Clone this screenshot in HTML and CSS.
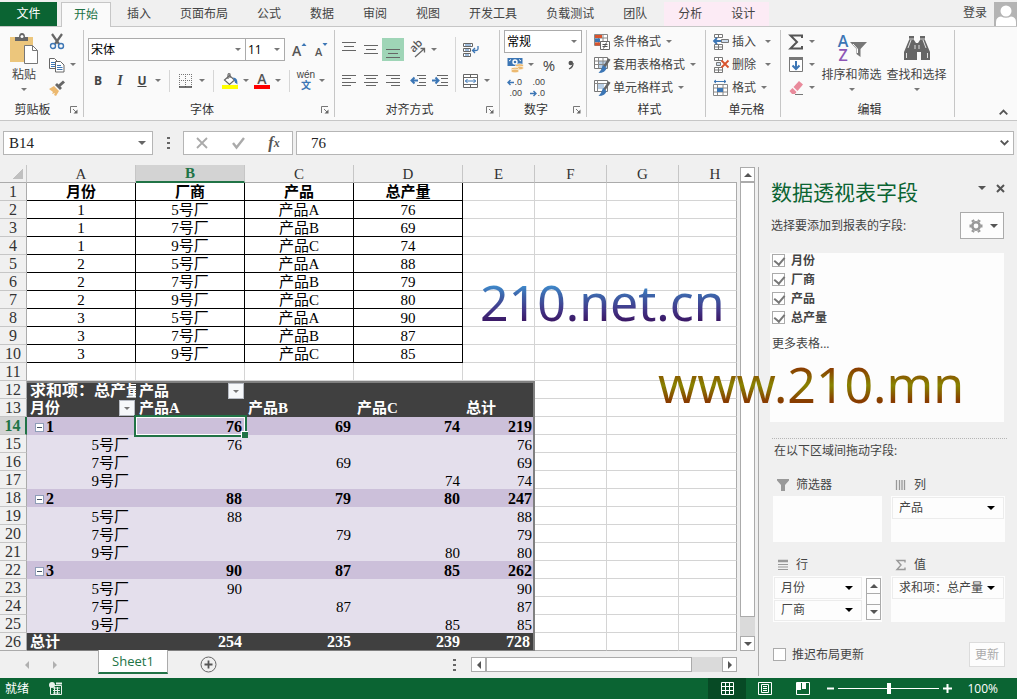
FILE: index.html
```html
<!DOCTYPE html>
<html lang="zh-CN">
<head>
<meta charset="utf-8">
<title>Sheet1</title>
<link rel="stylesheet" href="styles.css">
</head>
<body>
<nav class="tabs">
  <button class="tab file">文件</button>
  <button class="tab active">开始</button>
  <button class="tab">插入</button>
  <button class="tab">页面布局</button>
  <button class="tab">公式</button>
  <button class="tab">数据</button>
  <button class="tab">审阅</button>
  <button class="tab">视图</button>
  <button class="tab">开发工具</button>
  <button class="tab">负载测试</button>
  <button class="tab">团队</button>
  <div class="context"><button class="tab">分析</button><button class="tab">设计</button></div>
  <a class="login" href="#">登录</a>
  <svg class="avatar" width="23" height="24" viewBox="0 0 23 24"><rect width="23" height="24" fill="#b4b4b4"/><circle cx="12" cy="9" r="5.500" fill="#fff"/><path d="M2 24v-4q0-5 5-5.500q5 2.500 10 0q5 .5 5 5.500v4z" fill="#fff"/></svg>
</nav>

<header class="ribbon">
  <section class="group clip">
    <div class="body">
      <button class="big paste">
        <svg width="30" height="32" viewBox="0 0 30 32"><path d="M1 4h23v25H1z" fill="#ecc67c"/><path d="M6 8V4h4q0-4 3-4t3 4h3v4z" fill="#666"/><circle cx="13" cy="3.500" r="1.500" fill="#fff"/><path d="M15.500 12.500h8l5 5v13h-13z" fill="#fff" stroke="#777"/><path d="M23.500 12.500v5h5" fill="none" stroke="#777"/></svg>
        <span>粘贴</span><i class="dn"></i>
      </button>
      <div class="rows">
        <div class="row"><button class="ib" aria-label="剪切"><svg width="16" height="16" viewBox="0 0 16 16"><path d="M3 0l7 10M13 0L6 10" stroke="#666" stroke-width="2.200"/><circle cx="4" cy="12" r="2.500" fill="none" stroke="#3c76b5" stroke-width="1.400"/><circle cx="12" cy="12" r="2.500" fill="none" stroke="#3c76b5" stroke-width="1.400"/></svg></button></div>
        <div class="row"><button class="ib" aria-label="复制"><svg width="16" height="16" viewBox="0 0 16 16"><path d="M.5 1.500h5l3 3v7h-8z" fill="#fff" stroke="#666"/><path d="M2 5.500h4M2 7.500h4M2 9.500h4" stroke="#3c76b5"/><path d="M6.500 4.500h5l3.500 3.500v7H6.500z" fill="#fff" stroke="#666"/><path d="M8 8.500h4M8 10.500h5.500M8 12.500h5.500" stroke="#3c76b5"/></svg></button><i class="dd"></i></div>
        <div class="row"><button class="ib" aria-label="格式刷"><svg width="16" height="16" viewBox="0 0 16 16"><path d="M0 9l5-3 5 5-3 5-2-1 1-2-3 1 1-2z" fill="#ecb970"/><path d="M6 5l5 5 2-2-1.500-1.500L16 2.500 14 .5 9.500 4.500 8 3z" fill="#666"/></svg></button></div>
      </div>
    </div>
    <footer><span>剪贴板</span><button class="launch" aria-label="剪贴板设置"><svg width="8" height="8" viewBox="0 0 8 8"><path d="M.5 7V.5H7M3 3l3 3" fill="none" stroke="#777"/><path d="M7.500 3.500v4h-4z" fill="#666"/></svg></button></footer>
  </section>

  <section class="group font">
    <div class="body two">
      <div class="line">
        <label class="combo name"><select aria-label="字体"><option>宋体</option></select><i class="dn"></i></label>
        <label class="combo size"><select aria-label="字号"><option>11</option></select><i class="dn"></i></label>
        <button class="ib grow" aria-label="增大字号"><svg width="16" height="16" viewBox="0 0 16 16"><text class="glyph" x="1" y="14" font-size="14">A</text><path d="M10.500 4L13 1l2.500 3z" fill="#3c76b5"/></svg></button>
        <button class="ib" aria-label="减小字号"><svg width="16" height="16" viewBox="0 0 16 16"><text class="glyph" x="2" y="14" font-size="11">A</text><path d="M9.500 1l2.500 3 2.500-3z" fill="#3c76b5"/></svg></button>
      </div>
      <div class="line">
        <button class="ib b">B</button><button class="ib i">I</button><button class="ib u">U</button><i class="dd"></i><i class="sep"></i>
        <button class="ib" aria-label="边框"><svg width="14" height="14" viewBox="0 0 14 14"><path d="M0 .5h13M0 6.500h13M.5 0v13M6.500 0v13M12.500 0v13" stroke="#777" stroke-dasharray="1 1"/><path d="M0 13h13" stroke="#444" stroke-width="1.500"/></svg></button><i class="dd"></i><i class="sep"></i>
        <button class="ib" aria-label="填充颜色"><svg width="16" height="16" viewBox="0 0 16 16"><path d="M2.500 7l5-4.500 5 4.500-5 4.500z" fill="#fff" stroke="#666" stroke-width="1.200"/><path d="M6 6V2q0-2 2-1v4" fill="none" stroke="#666" stroke-width="1.200"/><path d="M11 4.500q5 0 4.500 7l-2.500-2z" fill="#3c76b5"/><path d="M0 12h16v4H0z" fill="#ff0"/></svg></button><i class="dd"></i>
        <button class="ib" aria-label="字体颜色"><svg width="16" height="16" viewBox="0 0 16 16"><text class="glyph" x="8" y="11" font-size="14" text-anchor="middle">A</text><path d="M0 12h16v4H0z" fill="red"/></svg></button><i class="dd"></i><i class="sep"></i>
        <button class="ib wen"><span>wén</span><b>文</b></button><i class="dd"></i>
      </div>
    </div>
    <footer><span>字体</span><button class="launch" aria-label="字体设置"><svg width="8" height="8" viewBox="0 0 8 8"><path d="M.5 7V.5H7M3 3l3 3" fill="none" stroke="#777"/><path d="M7.500 3.500v4h-4z" fill="#666"/></svg></button></footer>
  </section>

  <section class="group align">
    <div class="body">
      <div class="two">
        <div class="line">
          <button class="ib" aria-label="顶端对齐"><svg width="14" height="16" viewBox="0 0 14 16"><path d="M0 .5h14M2 4.500h10M0 8.500h14" stroke="#666"/></svg></button><button class="ib" aria-label="垂直居中"><svg width="14" height="16" viewBox="0 0 14 16"><path d="M0 3.500h14M2 7.500h10M0 11.500h14" stroke="#666"/></svg></button><button class="ib on" aria-label="底端对齐"><svg width="14" height="16" viewBox="0 0 14 16"><path d="M0 7.500h14M2 11.500h10M0 15.500h14" stroke="#666"/></svg></button>
          <button class="ib gap" aria-label="方向"><svg width="18" height="18" viewBox="0 0 18 18"><text class="glyph" x="3" y="12" font-size="11" transform="rotate(-45 4 10)">ab</text><path d="M6 16L15 8M11.500 7.500h4v4" fill="none" stroke="#666" stroke-width="1.300"/></svg></button><i class="dd"></i>
        </div>
        <div class="line">
          <button class="ib" aria-label="左对齐"><svg width="14" height="14" viewBox="0 0 14 14"><path d="M0 1.500h14M0 4.500h9M0 8.500h14M0 11.500h9" stroke="#666"/></svg></button><button class="ib" aria-label="居中"><svg width="14" height="14" viewBox="0 0 14 14"><path d="M0 1.500h14M2 4.500h10M0 8.500h14M2 11.500h10" stroke="#666"/></svg></button><button class="ib" aria-label="右对齐"><svg width="14" height="14" viewBox="0 0 14 14"><path d="M0 1.500h14M5 4.500h9M0 8.500h14M5 11.500h9" stroke="#666"/></svg></button>
          <button class="ib gap" aria-label="减少缩进"><svg width="16" height="14" viewBox="0 0 16 14"><path d="M7 1.500h9M9 4.500h7M9 8.500h7M7 11.500h9" stroke="#666"/><path d="M8 6.500H2M4.500 3.500l-3 3 3 3" fill="none" stroke="#3c76b5" stroke-width="2"/></svg></button><button class="ib" aria-label="增加缩进"><svg width="16" height="14" viewBox="0 0 16 14"><path d="M5 1.500h11M9 4.500h7M9 8.500h7M5 11.500h11" stroke="#666"/><path d="M0 6.500h6M3.500 3.500l3 3-3 3" fill="none" stroke="#3c76b5" stroke-width="2"/></svg></button>
        </div>
      </div>
      <i class="sep tall"></i>
      <div class="two">
        <div class="line"><button class="ib" aria-label="自动换行"><svg width="16" height="16" viewBox="0 0 16 16"><path d="M.5 1.500h9v3h-9zM.5 6.500h7v3h-7zM.5 11.500h7v3h-7z" fill="#fff" stroke="#666"/><path d="M2 8h4M2 13h4M2 3h6" stroke="#3c76b5"/><path d="M15 4v3q0 1.500-2 1.500H10M12 6L9.500 8.500 12 11" fill="none" stroke="#3c76b5" stroke-width="1.300"/></svg></button></div>
        <div class="line"><button class="ib" aria-label="合并后居中"><svg width="16" height="16" viewBox="0 0 16 16"><path d="M.5 1.500h14v13H.5zM.5 4.500h14M.5 11.500h14M7.500 1.500v3M7.500 11.500v3" fill="#fff" stroke="#666"/><path d="M2 8h11M4.500 6l-2 2 2 2M10.500 6l2 2-2 2" fill="none" stroke="#3c76b5"/></svg></button><i class="dd"></i></div>
      </div>
    </div>
    <footer><span>对齐方式</span><button class="launch" aria-label="对齐设置"><svg width="8" height="8" viewBox="0 0 8 8"><path d="M.5 7V.5H7M3 3l3 3" fill="none" stroke="#777"/><path d="M7.500 3.500v4h-4z" fill="#666"/></svg></button></footer>
  </section>

  <section class="group number">
    <div class="body rows">
      <label class="combo format"><select aria-label="数字格式"><option>常规</option></select><i class="dn"></i></label>
      <div class="row">
        <button class="ib" aria-label="会计数字格式"><svg width="17" height="16" viewBox="0 0 17 16"><path d="M.5 1h15v8H.5z" fill="#3c76b5"/><circle cx="8" cy="5" r="2.700" fill="#fff"/><circle cx="8" cy="5" r="1.300" fill="#3c76b5"/><path d="M2 4l2-1.500M12 2.500L14 4" stroke="#fff"/><g fill="#ecb970" stroke="#fff" stroke-width=".6"><ellipse cx="12.500" cy="8.500" rx="4" ry="1.800"/><ellipse cx="12.500" cy="11" rx="4" ry="1.800"/><ellipse cx="8" cy="12" rx="4" ry="1.800"/><ellipse cx="8" cy="14" rx="4" ry="1.800"/></g></svg></button><i class="dd"></i>
        <button class="ib pct">%</button><button class="ib" aria-label="千位分隔"><svg width="8" height="10" viewBox="0 0 8 10"><circle cx="3.800" cy="3" r="2.300" fill="#555"/><path d="M6 3q.3 4-4 6" fill="none" stroke="#555" stroke-width="1.300"/></svg></button>
      </div>
      <div class="row">
        <button class="ib dec"><span><svg width="7" height="7" viewBox="0 0 7 7"><path d="M7 3.500H1M3.500 1L1 3.500 3.500 6" fill="none" stroke="#3c76b5" stroke-width="1.400"/></svg>.0</span><span>.00</span></button>
        <button class="ib dec"><span>.00</span><span><svg width="7" height="7" viewBox="0 0 7 7"><path d="M0 3.500h6M3.500 1L6 3.500 3.500 6" fill="none" stroke="#3c76b5" stroke-width="1.400"/></svg>.0</span></button>
      </div>
    </div>
    <footer><span>数字</span><button class="launch" aria-label="数字设置"><svg width="8" height="8" viewBox="0 0 8 8"><path d="M.5 7V.5H7M3 3l3 3" fill="none" stroke="#777"/><path d="M7.500 3.500v4h-4z" fill="#666"/></svg></button></footer>
  </section>

  <section class="group style">
    <div class="body rows">
      <button class="row"><svg width="16" height="16" viewBox="0 0 16 16"><path d="M.5.500h13v11H.5zM.5 4h13M.5 8h13M4.500.500v11M9 .5v11" fill="#fff" stroke="#888"/><path d="M1 1h7v3H1zM1 8.500h5v3H1z" fill="#d9532c"/><path d="M1 4.500h5v3.500H1z" fill="#3c76b5"/><path d="M6.500 7.500h9v8h-9z" fill="#fff" stroke="#666"/><path d="M8.500 10.500h5M8.500 12.500h5M12.500 8.500l-3 6" stroke="#555"/></svg>条件格式<i class="dd"></i></button>
      <button class="row"><svg width="16" height="16" viewBox="0 0 16 16"><path d="M.5.500h13v11H.5z" fill="#fff" stroke="#777"/><path d="M4 4h9v7H4z" fill="#b9cfe6"/><path d="M.5 4h13M.5 7.500h13M4.500.500v11M9 .5v11" stroke="#888"/><path d="M15.500 2L10 10" stroke="#666" stroke-width="2.500"/><path d="M9 8l3.500 3q-1 5-8 5 3-3 4.500-8z" fill="#3c76b5"/></svg>套用表格格式<i class="dd"></i></button>
      <button class="row"><svg width="16" height="16" viewBox="0 0 16 16"><path d="M.5.500h13v11H.5z" fill="#fff" stroke="#777"/><path d="M4 4h6v5H4z" fill="#b9cfe6"/><path d="M.5 3.500h13M3.500.500v11" stroke="#888"/><path d="M15.500 2L10 10" stroke="#666" stroke-width="2.500"/><path d="M9 8l3.500 3q-1 5-8 5 3-3 4.500-8z" fill="#3c76b5"/></svg>单元格样式<i class="dd"></i></button>
    </div>
    <footer><span>样式</span></footer>
  </section>

  <section class="group cells">
    <div class="body rows">
      <button class="row"><svg width="16" height="16" viewBox="0 0 16 16"><path d="M1.500.500h8v3h-8zM5.500.500v3M1.500 10.500h8v5h-8zM5.500 10.500v5M1.500 13h8" fill="#fff" stroke="#777"/><path d="M8.500 5.500h7v3h-7z" fill="#cfdeee" stroke="#777"/><path d="M8 7H1M4 4L1 7l3 3" fill="none" stroke="#3c76b5" stroke-width="1.800"/></svg>插入<i class="dd far"></i></button>
      <button class="row"><svg width="16" height="16" viewBox="0 0 16 16"><path d="M1.500.500h8v3h-8zM5.500.500v3M1.500 10.500h8v5h-8zM5.500 10.500v5M1.500 13h8" fill="#fff" stroke="#777"/><path d="M3.500 5.500h4v3h-4z" fill="#cfdeee" stroke="#777"/><path d="M8.500 3.500l7 7M15.500 3.500l-7 7" stroke="#d9532c" stroke-width="1.800"/></svg>删除<i class="dd far"></i></button>
      <button class="row"><svg width="16" height="16" viewBox="0 0 16 16"><path d="M1 1.500h12M3 0L1 1.500 3 3M11 0l2 1.500L11 3" fill="none" stroke="#3c76b5"/><path d="M.5 4.500h14v11H.5zM.5 8h14M.5 12h14M4.500 4.500v11M10 4.500v11" fill="#fff" stroke="#888"/><path d="M4 8h6v4H4z" fill="#3c76b5"/></svg>格式<i class="dd"></i></button>
    </div>
    <footer><span>单元格</span></footer>
  </section>

  <section class="group edit">
    <div class="body">
      <div class="rows">
        <div class="row"><button class="ib" aria-label="求和"><svg width="16" height="16" viewBox="0 0 16 16"><path d="M14 4V1.500H2.500L9 8l-6.500 6.500H14V12" fill="none" stroke="#555" stroke-width="2"/></svg></button><i class="dd"></i></div>
        <div class="row"><button class="ib" aria-label="填充"><svg width="14" height="15" viewBox="0 0 14 15"><path d="M.5.500h13v14H.5z" fill="#fff" stroke="#777"/><path d="M0 0h14v3H0z" fill="#777"/><path d="M7 4v8M3.500 8.500L7 12l3.500-3.500" fill="none" stroke="#3c76b5" stroke-width="2"/></svg></button><i class="dd"></i></div>
        <div class="row"><button class="ib" aria-label="清除"><svg width="15" height="14" viewBox="0 0 15 14"><path d="M4.500 6L10 0l4 3.500L8.500 10z" fill="#e98a9b"/><path d="M3.500 7l4 4-1.500 2H3L.5 10z" fill="#e98a9b"/><path d="M6 13.500h8" stroke="#777"/></svg></button><i class="dd"></i></div>
      </div>
      <button class="big"><svg width="30" height="32" viewBox="0 0 30 32"><text class="glyph blue" x="6" y="14" font-size="16" text-anchor="middle">A</text><text class="glyph violet" x="6" y="28" font-size="16" text-anchor="middle">Z</text><path d="M13 9h17l-6.500 7v8l-4-3v-5z" fill="#777"/><path d="M16 11l4.500 5v4" stroke="#fff" fill="none"/></svg><span>排序和筛选</span><i class="dn"></i></button>
      <button class="big"><svg width="28" height="32" viewBox="0 0 28 32"><path d="M6 3h5v4l2 3h2l2-3V3h5v4l5 12v8h-9v-8h-4v8H1v-8L6 7z" fill="#666"/><path d="M3.500 20v5M24.500 20v5M8 7l-3 8M20 7l3 8M12 12v4M16 12v4" stroke="#fff" stroke-width=".8"/><path d="M5 6h7M16 6h7" stroke="#fff" stroke-width=".7"/></svg><span>查找和选择</span><i class="dn"></i></button>
    </div>
    <footer><span>编辑</span></footer>
  </section>
  <button class="collapse" aria-label="折叠功能区"><svg width="9" height="6" viewBox="0 0 9 6"><path d="M.7 5.300L4.500 1.500l3.800 3.800" fill="none" stroke="#555" stroke-width="1.800"/></svg></button>
</header>

<div class="formula">
  <label class="namebox"><input value="B14" aria-label="名称框"><i class="dn"></i></label>
  <i class="dots"></i>
  <div class="fxbox">
    <button aria-label="取消"><svg width="12" height="12" viewBox="0 0 12 12"><path d="M1 1l10 10M11 1L1 11" stroke="#aaa" stroke-width="1.800"/></svg></button>
    <button aria-label="输入"><svg width="13" height="12" viewBox="0 0 13 12"><path d="M1 6l3.500 4.500L12 1" fill="none" stroke="#aaa" stroke-width="2.400"/></svg></button>
    <button class="fx" aria-label="插入函数">f<sub>x</sub></button>
  </div>
  <label class="finput"><input value="76" aria-label="编辑栏"><svg width="9" height="6" viewBox="0 0 9 6"><path d="M.7.700l3.800 3.800L8.300.700" fill="none" stroke="#555" stroke-width="1.900"/></svg></label>
</div>

<main>
  <div class="workbook">
    <div class="gridrow">
      <div class="sheet">
        <table>
          <colgroup><col class="ch"><col class="cw"><col class="cw"><col class="cw"><col class="cw"><col class="cn"><col class="cn"><col class="cn"><col></colgroup>
          <thead><tr><th class="corner"></th><th>A</th><th class="sel">B</th><th>C</th><th>D</th><th>E</th><th>F</th><th>G</th><th class="last">H</th></tr></thead>
          <tbody class="data">
            <tr class="head"><th>1</th><td>月份</td><td>厂商</td><td>产品</td><td>总产量</td><td></td><td></td><td></td><td></td></tr>
            <tr><th>2</th><td>1</td><td>5号厂</td><td>产品A</td><td>76</td><td></td><td></td><td></td><td></td></tr>
            <tr><th>3</th><td>1</td><td>7号厂</td><td>产品B</td><td>69</td><td></td><td></td><td></td><td></td></tr>
            <tr><th>4</th><td>1</td><td>9号厂</td><td>产品C</td><td>74</td><td></td><td></td><td></td><td></td></tr>
            <tr><th>5</th><td>2</td><td>5号厂</td><td>产品A</td><td>88</td><td></td><td></td><td></td><td></td></tr>
            <tr><th>6</th><td>2</td><td>7号厂</td><td>产品B</td><td>79</td><td></td><td></td><td></td><td></td></tr>
            <tr><th>7</th><td>2</td><td>9号厂</td><td>产品C</td><td>80</td><td></td><td></td><td></td><td></td></tr>
            <tr><th>8</th><td>3</td><td>5号厂</td><td>产品A</td><td>90</td><td></td><td></td><td></td><td></td></tr>
            <tr><th>9</th><td>3</td><td>7号厂</td><td>产品B</td><td>87</td><td></td><td></td><td></td><td></td></tr>
            <tr><th>10</th><td>3</td><td>9号厂</td><td>产品C</td><td>85</td><td></td><td></td><td></td><td></td></tr>
          </tbody>
          <tbody><tr class="blank"><th>11</th><td></td><td></td><td></td><td></td><td></td><td></td><td></td><td></td></tr></tbody>
          <tbody class="pivot">
            <tr class="dark first"><th>12</th><td class="wide">求和项：总产量</td><td><div class="drop">产品<button aria-label="筛选产品"><i class="dn"></i></button></div></td><td></td><td></td><td></td><td></td><td></td><td></td></tr>
            <tr class="dark"><th>13</th><td><div class="drop">月份<button aria-label="筛选月份"><i class="dn"></i></button></div></td><td>产品A</td><td>产品B</td><td>产品C</td><td>总计</td><td></td><td></td><td></td></tr>
            <tr class="sub"><th class="sel">14</th><td><button class="fold" aria-label="折叠 1"></button>1</td><td class="current">76</td><td>69</td><td>74</td><td>219</td><td></td><td></td><td></td></tr>
            <tr><th>15</th><td>5号厂</td><td>76</td><td></td><td></td><td>76</td><td></td><td></td><td></td></tr>
            <tr><th>16</th><td>7号厂</td><td></td><td>69</td><td></td><td>69</td><td></td><td></td><td></td></tr>
            <tr><th>17</th><td>9号厂</td><td></td><td></td><td>74</td><td>74</td><td></td><td></td><td></td></tr>
            <tr class="sub"><th>18</th><td><button class="fold" aria-label="折叠 2"></button>2</td><td>88</td><td>79</td><td>80</td><td>247</td><td></td><td></td><td></td></tr>
            <tr><th>19</th><td>5号厂</td><td>88</td><td></td><td></td><td>88</td><td></td><td></td><td></td></tr>
            <tr><th>20</th><td>7号厂</td><td></td><td>79</td><td></td><td>79</td><td></td><td></td><td></td></tr>
            <tr><th>21</th><td>9号厂</td><td></td><td></td><td>80</td><td>80</td><td></td><td></td><td></td></tr>
            <tr class="sub"><th>22</th><td><button class="fold" aria-label="折叠 3"></button>3</td><td>90</td><td>87</td><td>85</td><td>262</td><td></td><td></td><td></td></tr>
            <tr><th>23</th><td>5号厂</td><td>90</td><td></td><td></td><td>90</td><td></td><td></td><td></td></tr>
            <tr><th>24</th><td>7号厂</td><td></td><td>87</td><td></td><td>87</td><td></td><td></td><td></td></tr>
            <tr><th>25</th><td>9号厂</td><td></td><td></td><td>85</td><td>85</td><td></td><td></td><td></td></tr>
            <tr class="sub dark total"><th>26</th><td>总计</td><td>254</td><td>235</td><td>239</td><td>728</td><td></td><td></td><td></td></tr>
          </tbody>
        </table>
      </div>
      <div class="vscroll"><button aria-label="向上滚动"><i class="up"></i></button><div class="thumb"></div><div class="track"></div><button aria-label="向下滚动"><i class="dn"></i></button></div>
    </div>
    <div class="sheetbar">
      <button class="nav" aria-label="上一个工作表"><i class="lt"></i></button><button class="nav" aria-label="下一个工作表"><i class="rt"></i></button>
      <button class="sheettab">Sheet1</button>
      <button class="add" aria-label="新工作表"><svg width="17" height="17" viewBox="0 0 17 17"><circle cx="8.500" cy="8.500" r="7.500" fill="none" stroke="#666"/><path d="M8.500 4.500v8M4.500 8.500h8" stroke="#555" stroke-width="1.800"/></svg></button>
      <i class="dots"></i>
      <div class="hscroll"><button aria-label="向左滚动"><i class="lt"></i></button><div class="thumb"></div><div class="track"></div><button aria-label="向右滚动"><i class="rt"></i></button></div>
    </div>
  </div>

  <aside>
    <div class="phead"><h2>数据透视表字段</h2><button aria-label="任务窗格选项"><i class="dn"></i></button><button aria-label="关闭"><svg width="9" height="9" viewBox="0 0 9 9"><path d="M1 1l7 7M8 1L1 8" stroke="#555" stroke-width="2"/></svg></button></div>
    <div class="psub"><span>选择要添加到报表的字段:</span><button class="gear" aria-label="工具"><svg width="14" height="14" viewBox="0 0 14 14"><circle cx="7" cy="7" r="3.700" fill="none" stroke="#999" stroke-width="2.600"/><g stroke="#999" stroke-width="3"><path d="M4.500 2.700L3.500 1M9.500 2.700l1-1.700M11.500 7h2M9.500 11.300l1 1.700M4.500 11.300l-1 1.700M2.500 7h-2"/></g></svg><i class="dn"></i></button></div>
    <div class="fields">
      <label><input type="checkbox" checked>月份</label>
      <label><input type="checkbox" checked>厂商</label>
      <label><input type="checkbox" checked>产品</label>
      <label><input type="checkbox" checked>总产量</label>
      <a href="#">更多表格...</a>
    </div>
    <p class="hint">在以下区域间拖动字段:</p>
    <div class="areas">
      <section>
        <h3><svg width="12" height="12" viewBox="0 0 12 12"><path d="M0 0h12v1.500L8 6v6H4V6L0 1.500z" fill="#999"/></svg>筛选器</h3>
        <div class="zone"></div>
      </section>
      <section>
        <h3><svg width="12" height="12" viewBox="0 0 12 12"><path d="M1.500 1v10M4.500 1v10M7 1v10M9.500 1v10" stroke="#999" stroke-width="1.300"/></svg>列</h3>
        <div class="zone"><div class="chips"><button class="chip">产品<i class="dn"></i></button></div></div>
      </section>
      <section>
        <h3><svg width="12" height="12" viewBox="0 0 12 12"><path d="M1 2h10" stroke="#999" stroke-width="2.500"/><path d="M1 5.500h10M1 8h10M1 10.500h10" stroke="#999"/></svg>行</h3>
        <div class="zone"><div class="chips"><button class="chip">月份<i class="dn"></i></button><button class="chip">厂商<i class="dn"></i></button></div>
          <div class="mini"><button aria-label="上移"><i class="up"></i></button><span></span><button aria-label="下移"><i class="dn"></i></button></div></div>
      </section>
      <section>
        <h3><svg width="12" height="12" viewBox="0 0 12 12"><path d="M10 3.500V1.500H2L6 6 2 10.500h8v-2" fill="none" stroke="#999" stroke-width="1.400"/></svg>值</h3>
        <div class="zone"><div class="chips"><button class="chip">求和项：总产量<i class="dn"></i></button></div></div>
      </section>
    </div>
    <div class="pfoot"><label><input type="checkbox">推迟布局更新</label><button disabled>更新</button></div>
  </aside>
  <div class="mark one">210.net.cn</div>
  <div class="mark site">www.210.mn</div>
</main>

<footer class="status">
  <span>就绪</span>
  <svg class="macro" width="14" height="13" viewBox="0 0 14 13"><path d="M1.500 3.500h11v9h-11zM4 6h7M4 8.500h7M4 11h7M5.500 5v7M8.500 5v7" fill="none" stroke="#e6f0ea"/><circle cx="3" cy="3" r="3" fill="#e6f0ea"/><path d="M7 1.500h6" stroke="#e6f0ea" stroke-width="2"/></svg>
  <button class="view on" aria-label="普通"><svg width="13" height="13" viewBox="0 0 13 13"><path d="M.5.500h12v12H.5zM.5 4.500h12M.5 8.500h12M4.500.500v12M8.500.500v12" fill="none" stroke="#fff"/></svg></button>
  <button class="view" aria-label="页面布局"><svg width="14" height="13" viewBox="0 0 14 13"><path d="M.5.500h13v12H.5zM3.500 2.500h7v8h-7zM5 4.500h4M5 6.500h4M5 8.500h4" fill="none" stroke="#fff"/></svg></button>
  <button class="view" aria-label="分页预览"><svg width="14" height="13" viewBox="0 0 14 13"><path d="M.5.500h13v12H.5z" fill="none" stroke="#fff"/><path d="M1 1h4v7H1zM6 1h4v6H6z" fill="#fff"/></svg></button>
  <button class="zoom minus" aria-label="缩小"><svg width="7" height="9" viewBox="0 0 7 9"><path d="M0 4.500h7" stroke="#fff" stroke-width="2"/></svg></button>
  <input type="range" min="10" max="190" value="100" aria-label="缩放">
  <button class="zoom" aria-label="放大"><svg width="9" height="9" viewBox="0 0 9 9"><path d="M0 4.500h9M4.500 0v9" stroke="#fff" stroke-width="2"/></svg></button>
  <span class="pctval">100%</span>
</footer>
</body>
</html>
```
FILE: styles.css
```css
* { box-sizing: border-box; }
body {
  margin: 0;
  min-height: 100vh;
  display: flex;
  flex-direction: column;
  background: #f0f0f0;
  color: #444;
  font: 12px/16px "Open Sans", "Noto Sans CJK SC", sans-serif;
}
button, input, select {
  font: inherit;
  color: inherit;
  border: 0;
  padding: 0;
  margin: 0;
  background: none;
  border-radius: 0;
}
button { display: flex; align-items: center; justify-content: center; }
a { color: inherit; text-decoration: none; }
svg { display: block; flex: none; overflow: visible; }
i { flex: none; font-style: normal; }
.glyph { font-family: "Open Sans", sans-serif; font-weight: 600; fill: #555; }
.glyph.blue { fill: #3c76b5; }
.glyph.violet { fill: #8d55b5; }

/* arrows */
.dn, .dd::after { content: ""; display: block; border: 3px solid transparent; border-top-color: #777; border-bottom: 0; }
.dd { width: 10px; display: flex; justify-content: center; }
.up { border: 4px solid transparent; border-bottom-color: #555; border-top: 0; }
.lt { border: 4px solid transparent; border-right-color: #555; border-left: 0; }
.rt { border: 4px solid transparent; border-left-color: #555; border-right: 0; }
.dots { width: 3px; height: 12px; background: repeating-linear-gradient(#666 0 2px, transparent 2px 5px); }

/* tabs */
.tabs { display: flex; gap: 1px; height: 27px; padding-top: 2px; border-bottom: 1px solid #c6c6c6; }
.tab { padding: 0 14px; height: 24px; }
.tab.file { width: 57px; background: #0b6433; color: #fff; margin-right: 3px; }
.tab.active { height: 25px; padding: 0 12px; margin-right: 1px; color: #217346; background: #fafafa; border: 1px solid #c6c6c6; border-bottom: 0; }
.context { display: flex; gap: 1px; margin-left: 2px; background: #fcebf5; }
.login { margin-left: auto; padding: 3px 6px 0 0; }

/* ribbon */
.ribbon { display: flex; height: 94px; padding-top: 3px; background: #fafafa; border-bottom: 1px solid #c6c6c6; }
.group { display: flex; flex-direction: column; height: 87px; border-right: 1px solid #c6c6c6; }
.group .body { display: flex; height: 73px; }
.group footer { display: flex; align-items: center; height: 14px; color: #333; }
.group footer span { flex: 1; text-align: center; }
.launch { width: 18px; height: 14px; }
.group .rows { display: flex; flex-direction: column; }
.row { display: flex; align-items: center; height: 23px; justify-content: flex-start; }
.group .two { display: flex; flex-direction: column; gap: 8px; padding-top: 8px; }
.line { display: flex; align-items: center; height: 23px; }
.ib { width: 22px; height: 23px; }
.big { flex-direction: column; justify-content: flex-start; }
.big span { line-height: 16px; margin-top: 2px; }
.big .dn { margin-top: 5px; }
.big svg { margin-top: 3px; }
.sep { width: 1px; height: 22px; margin: 0 5px 0 6px; background: #d6d6d6; }
.sep.tall { height: 55px; margin: 7px 4px 0; }
.combo { position: relative; display: flex; height: 23px; border: 1px solid #ababab; background: #fff; color: #000; }
.combo select { appearance: none; width: 100%; padding-left: 2px; outline: 0; }
.combo .dn { position: absolute; right: 4px; top: 9px; pointer-events: none; }
.clip { width: 84px; }
.paste { width: 46px; padding-left: 2px; }
.font { width: 251px; padding-left: 4px; }
.font .line:last-child { margin-left: -1px; }
.combo.name { width: 158px; }
.combo.size { width: 40px; margin-left: -1px; }
.grow { margin-left: 3px; }
.b { font-weight: 700; }
.i { font: italic 700 14px "Liberation Serif", serif; }
.u { font-weight: 700; text-decoration: underline; }
.wen { flex-direction: column; font: 10px/11px "Liberation Sans", "Noto Sans CJK SC", sans-serif; }
.wen b { color: #3c76b5; line-height: 12px; }
.align { width: 165px; padding-left: 3px; }
.on { background: #9fd5b7; }
.gap { margin-left: 3px; }
.number { width: 87px; padding-left: 4px; }
.format { width: 78px; }
.pct { font-size: 15px; margin-left: 2px; }
.dec { flex-direction: column; align-items: flex-end; font: 9px/11px "Liberation Sans", sans-serif; width: 18px; margin-right: 5px; }
.dec span { display: flex; align-items: center; }
.style { width: 119px; padding-left: 7px; }
.style .row, .cells .row { gap: 3px; }
.cells { width: 75px; padding-left: 7px; }
.cells .far { margin-left: 4px; }
.edit { width: 174px; padding-left: 4px; }
.edit .rows { width: 34px; }
.edit .big { width: 65px; }
.collapse { margin: auto 8px 0 auto; width: 12px; height: 16px; }

/* formula bar */
.formula { display: flex; align-items: center; padding: 10px 3px; font: 15px/22px "Liberation Serif", "Noto Sans CJK SC", serif; color: #222; }
.formula > label, .fxbox { display: flex; align-items: center; height: 24px; background: #fff; border: 1px solid #b5b5b5; }
.formula input { flex: 1; min-width: 0; outline: 0; }
.formula .dn { border-width: 4px; border-bottom: 0; border-top-color: #666; }
.namebox { width: 150px; padding: 0 6px 0 5px; }
.formula .dots { margin: 0 13px 0 14px; }
.fxbox { width: 110px; margin-right: 3px; }
.fxbox button { flex: 1; }
.fx { font: italic 700 16px/20px "Liberation Serif", serif; color: #555; }
.fx sub { font-size: 12px; line-height: 12px; }
.finput { flex: 1; padding: 0 4px 0 14px; }

/* worksheet */
main { position: relative; flex: 1; display: flex; }
.workbook { flex: 1; min-width: 0; display: flex; flex-direction: column; }
.gridrow { display: flex; }
.sheet { flex: 1; min-width: 0; }
table { width: 100%; table-layout: fixed; border-collapse: separate; border-spacing: 0; color: #000; font: 15px/16px "Liberation Serif", "Noto Sans CJK SC", serif; }
.ch { width: 27px; }
.cw { width: 109px; }
.cn { width: 72px; }
td, th { height: 18px; padding: 1px 0 0; overflow: hidden; white-space: nowrap; }
td { background: #fff; border: 0 solid #d4d4d4; border-width: 0 1px 1px 0; }
td:last-child { border-right-color: #ababab; }
th { background: #f0f0f0; color: #333; font-size: 16px; font-weight: 400; border: 0 solid #c6c6c6; border-width: 0 1px 1px 0; }
tbody th { border-right-color: #ababab; }
th.sel { background: #d3d3d3; color: #217346; font-weight: 700; border-right: 2px solid #217346; }
thead th { font-size: 15px; border-bottom-color: #ababab; border-right-color: #c6c6c6; }
thead th.sel { padding: 0; border-right: 1px solid #c6c6c6; border-bottom: 2px solid #217346; }
thead .last { border-right: 0; padding-left: 14px; }
.corner { background: linear-gradient(135deg, transparent 50%, #c0c0c0 50%) right 3px bottom 3px / 10px 10px no-repeat; }
.data td { text-align: center; }
.data td:nth-child(-n+5) { border-color: #000; }
.head td { font-weight: 700; }
.pivot td:nth-child(-n+6) { background: #e4dfec; border: 0; text-align: right; padding-right: 3px; }
.pivot td:nth-child(2) { padding-right: 7px; }
.pivot td:nth-child(6) { border-right: 2px solid #808080; padding-right: 1px; }
.pivot .sub td:nth-child(-n+6) { background: #ccc0da; font-weight: 700; font-size: 16px; }
.pivot .sub td:nth-child(2) { text-align: left; padding-left: 8px; }
.pivot .dark td:nth-child(-n+6) { background: #404040; color: #fff; font-weight: 700; text-align: left; padding: 0 0 0 3px; }
.pivot .first td:nth-child(-n+6) { border-top: 2px solid #808080; }
.pivot .total td:nth-child(-n+6) { border-bottom: 1px solid #808080; }
.pivot .total td:nth-child(n+3):nth-child(-n+6) { text-align: right; padding-right: 3px; }
.pivot .total td:nth-child(2) { padding-left: 3px; font-size: 15px; }
.total th, .total td { border-bottom-color: #ababab; }
.wide { font-size: 16px; }
.drop { display: flex; justify-content: space-between; height: 16px; line-height: 16px; padding-right: 1px; }
.drop button { width: 16px; height: 16px; background: #f6f8fa; border: 1px solid #b8bcc4; }
.fold { display: inline-flex; width: 9px; height: 9px; margin-right: 2px; vertical-align: 1px; border: 1px solid #8f9db8; background: linear-gradient(#456, #456) center / 5px 1px no-repeat #fff; }
.pivot td.current { position: relative; overflow: visible; }
.current::before { content: ""; position: absolute; inset: -2px; border: 2px solid #217346; box-shadow: inset 0 0 0 1px #fff; }
.current::after { content: ""; position: absolute; right: -3px; bottom: -3px; width: 6px; height: 6px; background: #217346; border: solid #fff; border-width: 1px 0 0 1px; }

/* scroll bars */
.vscroll { width: 15px; margin: 2px 3px 0; display: flex; flex-direction: column; }
.vscroll button, .hscroll button { flex: none; width: 15px; height: 15px; background: #fff; border: 1px solid #ababab; }
.vscroll .dn { border-width: 4px; border-bottom: 0; border-top-color: #555; }
.thumb { background: #fff; border: 1px solid #ababab; }
.vscroll .thumb { flex: 1; }
.vscroll .track { height: 19px; background: #dadada; }
.sheetbar { display: flex; align-items: center; height: 27px; padding-right: 21px; }
.nav { width: 28px; height: 20px; }
.nav:first-child { margin-left: 13px; }
.nav .lt { border-right-color: #b0b0b0; }
.nav .rt { border-left-color: #b0b0b0; }
.sheettab { align-self: flex-start; width: 70px; height: 24px; margin: -1px 32px 0 29px; background: #fff; color: #217346; font-size: 13px; border: 1px solid #ababab; border-width: 0 1px; border-bottom: 2px solid #217346; }
.sheetbar .dots { margin: 0 15px 0 auto; }
.hscroll { display: flex; width: 266px; height: 15px; }
.hscroll .thumb { flex: 1; }
.hscroll .track { width: 30px; background: #dadada; }

/* field pane */
aside { width: 259px; margin: 2px 0; padding: 9px 12px 0 12px; border-left: 1px solid #ababab; display: flex; flex-direction: column; }
.phead { display: flex; align-items: center; }
h2 { flex: 1; margin: 0; font-size: 21px; line-height: 32px; font-weight: 400; color: #0b6433; }
.phead button { width: 18px; height: 20px; margin-bottom: 8px; }
.phead button:last-child { margin-right: -4px; }
.phead .dn, .gear .dn { border-width: 4px; border-bottom: 0; border-top-color: #555; }
.psub { display: flex; align-items: center; justify-content: space-between; margin: 4px 1px 14px 0; }
.gear { width: 44px; height: 27px; gap: 7px; padding-left: 2px; background: #fdfdfd; border: 1px solid #ababab; }
.fields { display: flex; flex-direction: column; height: 169px; margin-right: 1px; margin-left: -1px; padding: 0 2px; background: #fdfdfd; }
.fields label { display: flex; align-items: center; height: 19px; font-weight: 700; }
.fields label:first-child { margin-top: -2px; }
.fields a { margin-top: 9px; }
input[type=checkbox] { appearance: none; flex: none; width: 13px; height: 13px; margin-right: 6px; border: 1px solid #ababab; background: #fff; position: relative; }
input[type=checkbox]:checked::after { content: ""; position: absolute; left: 3px; top: 0; width: 5px; height: 8px; border: solid #777; border-width: 0 2px 2px 0; transform: rotate(40deg); }
.hint { margin: 16px -2px 0 1px; padding: 4px 2px 0; border-top: 1px dotted #b5b5b5; }
.areas { display: grid; grid-template-columns: 109px 1fr; column-gap: 9px; margin-left: 2px; padding-top: 16px; row-gap: 13px; }
h3 { display: flex; align-items: center; gap: 7px; height: 20px; margin: 0 0 1px 4px; font-size: 12px; font-weight: 400; line-height: 20px; }
.zone { display: flex; justify-content: space-between; height: 46px; padding: 1px; background: #fdfdfd; }
.chips { flex: 1; display: flex; flex-direction: column; gap: 1px; }
.chip { justify-content: space-between; height: 22px; padding: 0 8px 0 6px; border: 1px solid #ececec; white-space: nowrap; }
.chip .dn { border-width: 4px; border-bottom: 0; border-top-color: #000; }
.mini { display: flex; flex-direction: column; width: 15px; margin: 1px 0 1px 4px; border: 1px solid #ababab; }
.mini button { height: 14px; }
.mini span { flex: 1; border: 1px solid #ababab; border-width: 1px 0; }
.mini .dn { border-width: 4px; border-bottom: 0; border-top-color: #555; }
.pfoot { display: flex; align-items: center; justify-content: space-between; margin: 20px 0 0 2px; }
.pfoot label { display: flex; align-items: center; }
.pfoot button { width: 36px; height: 25px; background: #fdfdfd; border: 1px solid #dcdcdc; color: #ababab; }

/* watermarks */
.mark { position: absolute; font: 50px/60px "Noto Sans", sans-serif; color: transparent; -webkit-background-clip: text; background-clip: text; pointer-events: none; }
.one { left: 480px; top: 107px; background-image: linear-gradient(#3f8fd0 20%, #3d62a8 40%, #43388a 62%, #3b1a68 80%); }
.site { left: 658px; top: 189px; background-image: linear-gradient(#8a3800 22%, #888400 52%, #883c00 78%); }

/* status bar */
.status { display: flex; align-items: center; height: 21px; padding-left: 5px; background: #0b6433; color: #fff; }
.macro { margin: 0 auto 0 20px; }
.view { width: 38px; height: 21px; }
.view.on { background: #074a25; }
.zoom { width: 9px; height: 21px; }
.minus { margin-left: 4px; }
input[type=range] { appearance: none; width: 101px; height: 11px; margin: 0 4px 0 3px; background: linear-gradient(#fff, #fff) center / 100% 1px no-repeat; }
input[type=range]::-webkit-slider-thumb { appearance: none; width: 4px; height: 11px; background: #fff; }
.pctval { margin: 0 19px 0 15px; }
```
